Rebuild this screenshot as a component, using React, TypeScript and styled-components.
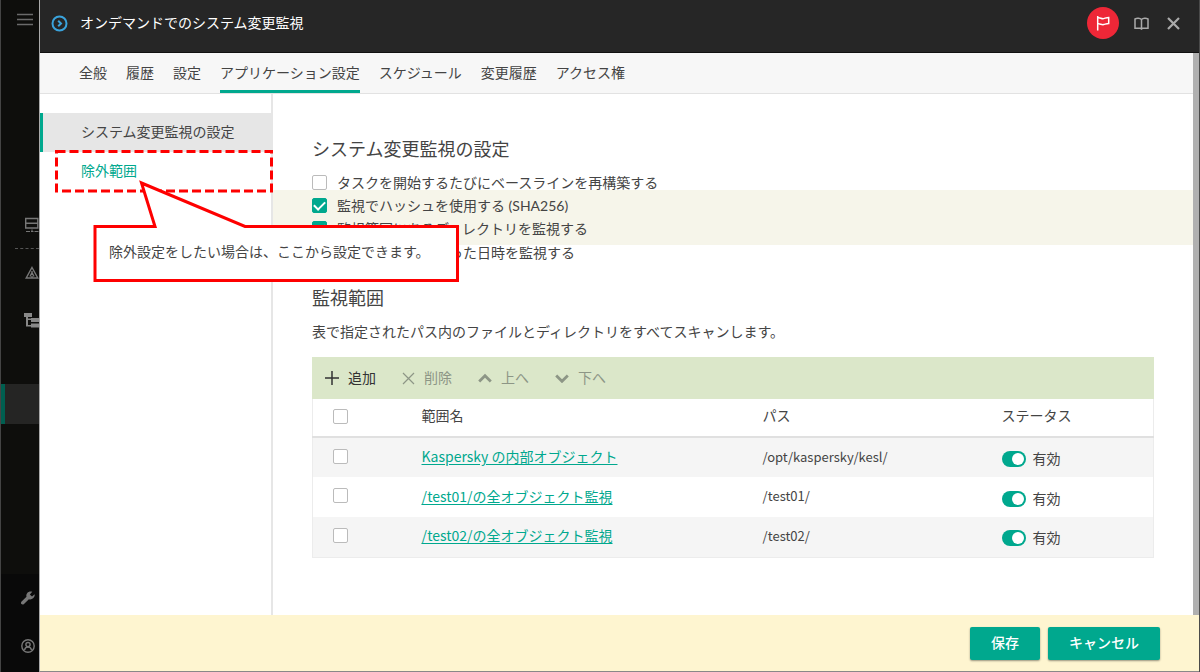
import React from "react";
import styled, { createGlobalStyle, css } from "styled-components";

const TEAL = "#00a88e";

const GlobalStyle = createGlobalStyle`
  * { box-sizing: border-box; }
  body {
    margin: 0;
    color: #444;
    background: #fff;
    font: 14px/20px Lato, "Noto Sans CJK JP", sans-serif;
  }
  button, input { font: inherit; color: inherit; }
`;

const Shell = styled.div`
  display: flex;
  min-height: 100vh;
  border-right: 1px solid #4a4a4a;
`;

const Rail = styled.nav`
  display: flex;
  flex-direction: column;
  flex: none;
  width: 39px;
  background: #0e0e0c;
  border-left: 1px solid #444;
`;

const RailItem = styled.button<{ $height: number; $active?: boolean }>`
  display: flex;
  align-items: center;
  justify-content: flex-end;
  width: 100%;
  height: ${(p) => p.$height}px;
  padding: 0;
  border: 0;
  border-left: 4px solid ${(p) => (p.$active ? "#005f50" : "transparent")};
  background: ${(p) => (p.$active ? "#252524" : "transparent")};
  overflow: hidden;
  svg { flex: none; }
`;

const RailSpace = styled.div<{ $grow?: boolean; $height?: number }>`
  flex: ${(p) => (p.$grow ? "1" : "none")};
  height: ${(p) => p.$height ?? 0}px;
`;

const RailDivider = styled.hr`
  width: 24px;
  margin: 0 0 0 auto;
  border: 0;
  border-top: 1px dashed #555;
`;

const RailFoot = styled.div`
  padding: 0 0 2px;
  background: #090909;
`;

const Dialog = styled.div`
  display: flex;
  flex-direction: column;
  flex: 1;
  min-width: 0;
  border-left: 1px solid #aaa;
  border-bottom: 1px solid #888;
`;

const Header = styled.header`
  display: flex;
  align-items: center;
  height: 53px;
  padding: 0 10px 6px 11px;
  gap: 12px;
  background: #262626;
  border-bottom: 1px solid #111;
`;

const Title = styled.h1`
  flex: 1;
  margin: 0;
  color: #fff;
  font-size: 14px;
  font-weight: 400;
`;

const HeaderActions = styled.div`
  display: flex;
  align-items: center;
`;

const IconButton = styled.button<{ $round?: boolean }>`
  display: flex;
  align-items: center;
  justify-content: center;
  width: 32px;
  height: 32px;
  padding: 0;
  border: 0;
  border-radius: 50%;
  background: ${(p) => (p.$round ? "#ee2737" : "transparent")};
  margin-right: ${(p) => (p.$round ? "6px" : "0")};
`;

const Scroller = styled.div`
  display: flex;
  flex-direction: column;
  flex: 1;
  border-right: 6px solid #b0b0b0;
`;

const Tabs = styled.nav`
  display: flex;
  gap: 19px;
  height: 41px;
  padding: 0 39px;
  background: #f7f7f7;
  border-bottom: 1px solid #e2e2e2;
`;

const Tab = styled.a<{ $active?: boolean }>`
  padding: 10px 0 0;
  color: #444;
  text-decoration: none;
  white-space: nowrap;
  border-bottom: 3px solid ${(p) => (p.$active ? TEAL : "transparent")};
`;

const Body = styled.div`
  display: flex;
  flex: 1;
`;

const SideNav = styled.nav`
  flex: none;
  width: 233px;
  padding-top: 19px;
  border-right: 2px solid #e6e6e6;
`;

const SideLink = styled.a<{ $active?: boolean }>`
  display: block;
  height: 39px;
  padding: 9px 0 0 38px;
  text-decoration: none;
  color: ${TEAL};
  border-left: 3px solid transparent;
  ${(p) =>
    p.$active &&
    css`
      color: #444;
      background: #e6e6e6;
      border-left-color: ${TEAL};
    `}
`;

const Annotated = styled.div`
  position: relative;
`;

const Outline = styled.svg`
  position: absolute;
  z-index: 2;
  left: 15px;
  top: -3px;
  pointer-events: none;
`;

const Note = styled.p`
  position: absolute;
  z-index: 3;
  left: 69px;
  top: 90px;
  margin: 0;
  white-space: nowrap;
  color: #444;
`;

const Main = styled.main`
  flex: 1;
  min-width: 0;
  padding: 42px 39px 56px;
`;

const Heading = styled.h2`
  margin: 0;
  font-size: 18px;
  font-weight: 400;
  line-height: 26px;
`;

const Options = styled.div`
  margin: 13px 0 24px;
`;

const OptionBand = styled.div`
  margin: 0 -39px;
  padding: 4px 39px 5px;
  background: #f6f5ea;
`;

const Option = styled.label<{ $height: number }>`
  display: flex;
  align-items: center;
  gap: 10px;
  height: ${(p) => p.$height}px;
`;

const Check = styled.input.attrs({ type: "checkbox" })`
  appearance: none;
  flex: none;
  width: 15px;
  height: 15px;
  margin: 0;
  border: 1px solid #bbb;
  border-radius: 2px;
  background: #fff;
  display: grid;
  place-items: center;
  &:checked {
    background: ${TEAL};
    border-color: ${TEAL};
  }
  &:checked::after {
    content: "";
    width: 9px;
    height: 5px;
    border: solid #fff;
    border-width: 0 0 2px 2px;
    transform: translateY(-1px) rotate(-45deg);
  }
`;

const Description = styled.p`
  margin: 11px 0 15px;
`;

const Toolbar = styled.div`
  display: flex;
  align-items: center;
  height: 42px;
  padding: 0 13px;
  gap: 26px;
  background: #dbe7c9;
`;

const ToolButton = styled.button`
  display: flex;
  align-items: center;
  gap: 9px;
  padding: 0;
  border: 0;
  background: none;
  color: #333;
  &:disabled { color: #8d9686; }
`;

const Table = styled.table`
  width: 100%;
  table-layout: fixed;
  border-collapse: collapse;
  border: 1px solid #ececec;
  border-top: 0;
  th, td {
    padding: 0 0 3px;
    font-weight: 400;
    text-align: left;
  }
  td { font-family: "Noto Sans CJK JP", sans-serif; }
  thead tr { height: 38px; border-bottom: 2px solid #e0e0e0; }
  tbody tr { height: 40px; }
  tbody tr:nth-child(odd) { background: #f5f5f5; }
`;

const Col = styled.col<{ $width?: number }>`
  width: ${(p) => (p.$width ? `${p.$width}px` : "auto")};
`;

const CellCheck = styled(Check)`
  margin-left: 20px;
`;

const NameLink = styled.a`
  color: ${TEAL};
  text-decoration: underline;
  text-underline-offset: 2px;
`;

const PathText = styled.span`
  font-size: 13px;
`;

const SwitchLabel = styled.label`
  display: flex;
  align-items: center;
  gap: 7px;
  padding-top: 6px;
  font-family: Lato, "Noto Sans CJK JP", sans-serif;
`;

const Switch = styled.input.attrs({ type: "checkbox", role: "switch" })`
  appearance: none;
  display: flex;
  align-items: center;
  width: 24px;
  height: 16px;
  margin: 0;
  padding: 0 2px;
  border-radius: 8px;
  background: #aaa;
  &::after {
    content: "";
    width: 12px;
    height: 12px;
    border-radius: 50%;
    background: #fff;
  }
  &:checked {
    justify-content: flex-end;
    background: ${TEAL};
  }
`;

const Footer = styled.footer`
  display: flex;
  justify-content: flex-end;
  gap: 8px;
  padding: 12px 39px 11px;
  background: #fef5d0;
`;

const ActionButton = styled.button`
  height: 33px;
  padding: 0 21px 2px;
  border: 0;
  border-radius: 2px;
  color: #fff;
  font-weight: 500;
  background: ${TEAL};
  box-shadow: 0 1px 2px rgba(0, 0, 0, 0.4);
`;

const rows = [
  { name: "Kaspersky の内部オブジェクト", path: "/opt/kaspersky/kesl/" },
  { name: "/test01/の全オブジェクト監視", path: "/test01/" },
  { name: "/test02/の全オブジェクト監視", path: "/test02/" },
];

const tabs = ["全般", "履歴", "設定", "アプリケーション設定", "スケジュール", "変更履歴", "アクセス権"];

export default function App() {
  return (
    <>
      <GlobalStyle />
      <Shell>
        <Rail aria-label="メイン">
          <RailItem $height={39} aria-label="メニュー">
            <svg width="22" height="13" viewBox="0 0 22 13" stroke="#6a6a6a" strokeWidth="1.4">
              <path d="M0 1.5h16M0 6.5h16M0 11.5h16" />
            </svg>
          </RailItem>
          <RailSpace $height={165} />
          <RailItem $height={44} aria-label="デバイス">
            <svg width="15" height="18" viewBox="0 0 15 18" fill="none" stroke="#777" strokeWidth="1.4">
              <path d="M1.700 1.500H13.800v9.500H1.700zM1.700 6.200h12" />
              <path d="M2 14.500h4M7 14.500h2.500M10.500 14.500h4M8 12.500v2" strokeWidth="1" />
            </svg>
          </RailItem>
          <RailDivider />
          <RailItem $height={47} aria-label="アラート">
            <svg width="14" height="13" viewBox="0 0 14 13" fill="none" stroke="#777" strokeWidth="1.4">
              <path d="M7 1.500 12.800 12H1.200zM7 5v4M7 10v1.200M5 10.500l2-4 2 4" />
            </svg>
          </RailItem>
          <RailItem $height={48} aria-label="階層">
            <svg width="15" height="15" viewBox="0 0 15 15" fill="#888">
              <path d="M0 0h8v4H4v1.500h3V5h8v4H7V7H4v5h3v-1.500h8v4H7v-1H2V4H0z" />
            </svg>
          </RailItem>
          <RailSpace $height={40} />
          <RailItem $height={40} $active aria-label="選択中" />
          <RailSpace $grow />
          <RailFoot>
            <RailItem $height={48} aria-label="設定">
              <svg width="18" height="14" viewBox="0 0 18 14" fill="#777">
                <path d="M13.600 3.200 11 5.600 8.800 3.400 11.300.8C9.500 0 7.500.5 6.300 1.900c-1 1.200-1.200 2.500-.8 3.900L.6 10.600c-.8.9-.8 1.800-.1 2.500s1.700.6 2.500-.1L7.900 8.200c1.500.5 3 .2 4.200-.9 1.200-1.200 1.900-2.600 1.500-4.100z" />
              </svg>
            </RailItem>
            <RailItem $height={48} aria-label="アカウント">
              <svg width="18" height="14" viewBox="0 0 18 14" fill="none" stroke="#777" strokeWidth="1.400">
                <circle cx="7" cy="7" r="6.200" />
                <circle cx="7" cy="5.600" r="2.100" />
                <path d="M3.600 11c.3-2 1.600-3 3.400-3s3.100 1 3.400 3" />
              </svg>
            </RailItem>
          </RailFoot>
        </Rail>

        <Dialog role="dialog" aria-labelledby="dialog-title">
          <Header>
            <svg width="17" height="17" viewBox="0 0 17 17" fill="none" stroke="#3aa3dc" strokeWidth="2">
              <circle cx="8.500" cy="8.500" r="7" />
              <path d="M7.200 5.700 10 8.500l-2.800 2.800" />
            </svg>
            <Title id="dialog-title">オンデマンドでのシステム変更監視</Title>
            <HeaderActions>
              <IconButton $round aria-label="フラグ">
                <svg width="16" height="16" viewBox="0 0 16 16" fill="none" stroke="#fff" strokeWidth="1.500">
                  <path d="M2.700 1v14.500M2.700 3c2-1 3.800 1.200 6 .6 1.600-.4 3-1.200 5-1.200v6c-2 0-3.400.8-5 1.200-2.200.6-4-1.400-6-.6" />
                </svg>
              </IconButton>
              <IconButton aria-label="ヘルプ">
                <svg width="15" height="13" viewBox="0 0 15 13" fill="none" stroke="#aaa" strokeWidth="1.500">
                  <path d="M7.500 2.500C6 .9 2.800.9 1 1.900v9.300h5.200l1.300.8 1.300-.8H14V1.900C12.200.9 9 .9 7.500 2.500zM7.500 2.500V11.500" />
                </svg>
              </IconButton>
              <IconButton aria-label="閉じる">
                <svg width="13" height="13" viewBox="0 0 13 13" stroke="#aaa" strokeWidth="2.200">
                  <path d="M1 1l11 11M12 1 1 12" />
                </svg>
              </IconButton>
            </HeaderActions>
          </Header>

          <Scroller>
            <Tabs aria-label="タブ">
              {tabs.map((t) => (
                <Tab key={t} href="#" $active={t === "アプリケーション設定"}>
                  {t}
                </Tab>
              ))}
            </Tabs>

            <Body>
              <SideNav aria-label="アプリケーション設定">
                <SideLink href="#" $active>
                  システム変更監視の設定
                </SideLink>
                <Annotated>
                  <SideLink href="#">除外範囲</SideLink>
                  <Outline width="406" height="136" viewBox="0 0 406 136" fill="none" stroke="#fe0000" strokeWidth="3" aria-hidden="true">
                    <path d="M1.500 2.500h215v39.500H1.500z" strokeDasharray="9 4" />
                    <path d="M40 77.500h60L86.500 34 190 77.500h212.500v54H40z" fill="#fff" />
                  </Outline>
                  <Note>除外設定をしたい場合は、ここから設定できます。</Note>
                </Annotated>
              </SideNav>

              <Main>
                <Heading>システム変更監視の設定</Heading>
                <Options>
                  <Option $height={15}>
                    <Check />
                    タスクを開始するたびにベースラインを再構築する
                  </Option>
                  <OptionBand>
                    <Option $height={23}>
                      <Check defaultChecked />
                      監視でハッシュを使用する (SHA256)
                    </Option>
                    <Option $height={23}>
                      <Check defaultChecked />
                      監視範囲にあるディレクトリを監視する
                    </Option>
                  </OptionBand>
                  <Option $height={16}>
                    <Check defaultChecked />
                    ファイル操作を行った日時を監視する
                  </Option>
                </Options>

                <Heading>監視範囲</Heading>
                <Description>表で指定されたパス内のファイルとディレクトリをすべてスキャンします。</Description>

                <Toolbar role="toolbar">
                  <ToolButton>
                    <svg width="14" height="14" viewBox="0 0 14 14" stroke="currentColor" strokeWidth="1.500">
                      <path d="M7 0v14M0 7h14" />
                    </svg>
                    追加
                  </ToolButton>
                  <ToolButton disabled>
                    <svg width="13" height="13" viewBox="0 0 13 13" stroke="currentColor" strokeWidth="1.200">
                      <path d="M1 1l11 11M12 1 1 12" />
                    </svg>
                    削除
                  </ToolButton>
                  <ToolButton disabled>
                    <svg width="14" height="10" viewBox="0 0 14 10" fill="none" stroke="currentColor" strokeWidth="2.800">
                      <path d="M1.200 8.500 7 2.700l5.800 5.800" />
                    </svg>
                    上へ
                  </ToolButton>
                  <ToolButton disabled>
                    <svg width="14" height="10" viewBox="0 0 14 10" fill="none" stroke="currentColor" strokeWidth="2.800">
                      <path d="M1.200 2.500 7 8.300l5.800-5.800" />
                    </svg>
                    下へ
                  </ToolButton>
                </Toolbar>
                <Table>
                  <colgroup>
                    <Col $width={109} />
                    <Col />
                    <Col $width={239} />
                    <Col $width={152} />
                  </colgroup>
                  <thead>
                    <tr>
                      <th>
                        <CellCheck aria-label="すべて選択" />
                      </th>
                      <th>範囲名</th>
                      <th>パス</th>
                      <th>ステータス</th>
                    </tr>
                  </thead>
                  <tbody>
                    {rows.map((r) => (
                      <tr key={r.path}>
                        <td>
                          <CellCheck aria-label={r.name} />
                        </td>
                        <td>
                          <NameLink href="#">{r.name}</NameLink>
                        </td>
                        <td>
                          <PathText>{r.path}</PathText>
                        </td>
                        <td>
                          <SwitchLabel>
                            <Switch defaultChecked />
                            有効
                          </SwitchLabel>
                        </td>
                      </tr>
                    ))}
                  </tbody>
                </Table>
              </Main>
            </Body>
          </Scroller>

          <Footer>
            <ActionButton>保存</ActionButton>
            <ActionButton>キャンセル</ActionButton>
          </Footer>
        </Dialog>
      </Shell>
    </>
  );
}
